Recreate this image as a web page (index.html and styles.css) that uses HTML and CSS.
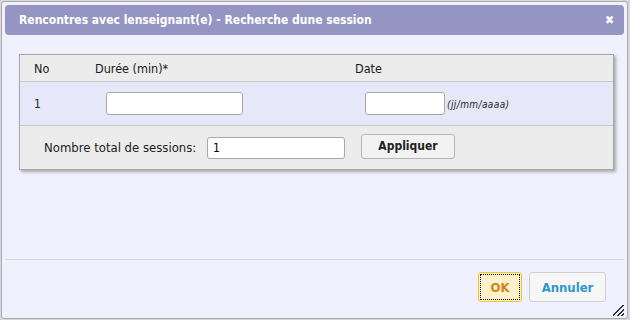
FILE: index.html
```html
<!DOCTYPE html>
<html>

<head>
    <title>Recherche dune session</title>
    <link rel="stylesheet" href="styles.css">
</head>

<body>
    <div class="dialog">
        <div class="titlebar">
            <span>Rencontres avec lenseignant(e) - Recherche dune session</span>
            <span class="close">&#10006;</span>
        </div>
        <div class="content">
            <div class="panel">
                <div class="row head">
                    <div class="c-no">No</div>
                    <div class="c-dur">Durée (min)*</div>
                    <div class="c-date">Date</div>
                </div>
                <div class="row item">
                    <div class="c-no">1</div>
                    <div class="c-dur"><input type="text" class="dur"></div>
                    <div class="c-date"><input type="text" class="date"><span class="hint">(jj/mm/aaaa)</span></div>
                </div>
                <div class="footer">
                    <label for="total">Nombre total de sessions:</label>
                    <input type="text" id="total" class="total" value="1">
                    <button class="apply">Appliquer</button>
                </div>
            </div>
        </div>
        <div class="buttonpane">
            <button class="ok">OK</button>
            <button class="cancel">Annuler</button>
        </div>
        <div class="grip"></div>
    </div>
</body>

</html>
```

FILE: styles.css
```css
body {
    margin: 0;
    background: #d8d8d8;
    font-family: "DejaVu Sans Condensed", "DejaVu Sans", sans-serif;
    font-size: 13px;
    color: #222;
}

.dialog {
    position: relative;
    box-sizing: border-box;
    width: 627px;
    height: 318px;
    margin: 1px 0 0 1px;
    padding: 3px;
    background: #f0f0fe;
    border: 1px solid #a9a9a9;
    border-radius: 3px;
    display: flex;
    flex-direction: column;
}

.titlebar {
    height: 30px;
    display: flex;
    align-items: center;
    justify-content: space-between;
    padding: 0 10px 0 14px;
    background: #9595c4;
    border-radius: 4px;
    color: #fff;
    font-weight: bold;
    font-size: 12px;
}

.close {
    font-size: 12px;
    font-weight: bold;
}

.content {
    flex: 1;
    padding: 19px 0 0 14px;
    border-bottom: 1px solid #d9d9e3;
}

.panel {
    width: 593px;
    background: #ececec;
    border: 1px solid #a6a6a6;
    box-shadow: 2px 2px 3px #a8a8a8;
}

.row {
    display: flex;
    align-items: center;
}

.row > div {
    box-sizing: border-box;
}

.c-no {
    width: 75px;
    padding-left: 14px;
}

.c-dur {
    width: 260px;
}

.c-date {
    display: flex;
    align-items: flex-end;
}

.head {
    height: 26px;
    font-size: 12.5px;
    color: #1a1a1a;
}

.item {
    height: 43px;
    background: #e7e7fa;
    border-top: 1px solid #c8c8c8;
    border-bottom: 1px solid #c8c8c8;
    font-size: 12px;
}

.item .c-dur {
    padding-left: 11px;
}

.item .c-date {
    padding-left: 10px;
}

input {
    box-sizing: border-box;
    height: 23px;
    border: 1px solid #a9a9a9;
    border-radius: 3px;
    background: #fff;
    font-family: inherit;
    font-size: 12px;
    padding: 2px 5px;
}

.dur {
    width: 137px;
}

.date {
    width: 80px;
}

.hint {
    font-size: 10px;
    letter-spacing: 0.4px;
    font-style: italic;
    margin: 0 0 5px 2px;
}

.footer {
    height: 43px;
    display: flex;
    align-items: center;
    padding-left: 24px;
}

.footer label {
    width: 163px;
}

.total {
    width: 138px;
    height: 22px;
    margin-top: 1px;
}

.apply {
    margin: 0 0 3px 16px;
    width: 94px;
    height: 25px;
    border: 1px solid #b5b5b5;
    border-radius: 3px;
    background: #f2f2f2;
    font-family: inherit;
    font-size: 12px;
    font-weight: bold;
    color: #222;
}

.buttonpane {
    height: 55px;
    display: flex;
    justify-content: flex-end;
    align-items: flex-start;
    gap: 7px;
    padding: 12px 18px 0 0;
    box-sizing: border-box;
}

.buttonpane button {
    height: 30px;
    border-radius: 3px;
    font-family: inherit;
    font-size: 13px;
    font-weight: bold;
}

.ok {
    width: 44px;
    background: #fdf2c9;
    border: 1px solid #f6c628;
    color: #d3831d;
    outline: 1px dotted #000;
    outline-offset: -3px;
}

.cancel {
    width: 77px;
    background: #f6f6f6;
    border: 1px solid #d0d0d0;
    color: #2e97cf;
}

.grip {
    position: absolute;
    right: 3px;
    bottom: 2px;
    width: 11px;
    height: 11px;
    background: linear-gradient(135deg, transparent 45%, #333 45%, #333 52%, transparent 52%, transparent 66%, #333 66%, #333 73%, transparent 73%, transparent 86%, #333 86%, #333 93%, transparent 93%);
}
```
